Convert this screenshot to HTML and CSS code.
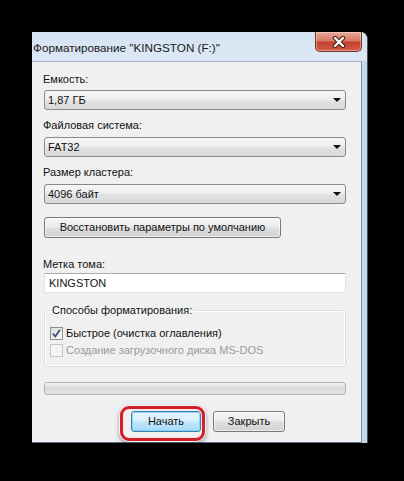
FILE: index.html
```html
<!DOCTYPE html>
<html lang="ru">
<head>
  <meta charset="UTF-8" />
  <meta name="viewport" content="width=device-width, initial-scale=1.0" />
  <title>Форматирование</title>
  <link rel="stylesheet" href="styles.css">
</head>
<body>
  <div class="window">
    <div class="titlebar">
      <span class="title">Форматирование "KINGSTON (F:)"</span>
      <button class="close" aria-label="Закрыть">
        <svg width="14" height="12" viewBox="0 0 14 12">
          <path d="M3 2 L11 10 M11 2 L3 10" stroke="#4a1a12" stroke-width="4.4" stroke-linecap="round" fill="none"/>
          <path d="M3 2 L11 10 M11 2 L3 10" stroke="#ffffff" stroke-width="2.4" stroke-linecap="round" fill="none"/>
        </svg>
      </button>
    </div>
    <div class="client">
      <div class="field-label">Емкость:</div>
      <div class="combo"><span>1,87 ГБ</span><span class="arrow"></span></div>

      <div class="field-label">Файловая система:</div>
      <div class="combo"><span>FAT32</span><span class="arrow"></span></div>

      <div class="field-label">Размер кластера:</div>
      <div class="combo"><span>4096 байт</span><span class="arrow"></span></div>

      <button class="btn btn-defaults">Восстановить параметры по умолчанию</button>

      <div class="field-label label-volume">Метка тома:</div>
      <div class="edit">KINGSTON</div>

      <fieldset class="group">
        <legend>Способы форматирования:</legend>
        <div class="check">
          <span class="box">
            <svg width="11" height="11" viewBox="0 0 11 11">
              <path d="M2 5.5 L4.3 8.5 L9 1.8" stroke="#435278" stroke-width="1.9" fill="none"/>
            </svg>
          </span>
          Быстрое (очистка оглавления)
        </div>
        <div class="check disabled">
          <span class="box"></span>
          Создание загрузочного диска MS-DOS
        </div>
      </fieldset>

      <div class="progress"></div>

      <div class="actions">
        <span class="marked">
          <button class="btn btn-focus">Начать</button>
          <span class="highlight"></span>
        </span>
        <button class="btn btn-close">Закрыть</button>
      </div>
    </div>
  </div>
</body>
</html>
```
FILE: styles.css
```css
body {
  margin: 0;
  background: #000;
  font-family: 'Liberation Sans', Arial, sans-serif;
  font-size: 11px;
  line-height: 15px;
  color: #111;
}
.window {
  margin: 32px 0 0 32px;
  width: 335px;
  background: #c3d7ed;
  border-right: 1px solid #4e4e4e;
  border-top-right-radius: 7px;
}
.titlebar {
  height: 29px;
  display: flex;
  justify-content: space-between;
  align-items: flex-start;
  background: linear-gradient(#d6e3f2, #dce8f5);
  border-top-right-radius: 7px;
}
.title {
  margin: 8px 0 0 1px;
  font-size: 11.7px;
  line-height: 16px;
  color: #1a1a1a;
}
.close {
  margin: 0 5px 0 0;
  width: 47px;
  height: 20px;
  padding: 0;
  display: flex;
  align-items: center;
  justify-content: center;
  border: 1px solid #7b3328;
  border-top: none;
  border-radius: 0 0 5px 5px;
  background: linear-gradient(#e9a899 0%, #d77a66 45%, #c2412f 55%, #d45c45 100%);
  box-shadow: inset 0 0 0 1px rgba(255, 255, 255, 0.35);
}
.client {
  margin: 0 5px 5px 0;
  background: #f0f0f0;
  border-top: 1px solid #a3b2c6;
  border-right: 1px solid #7f90a8;
  border-bottom: 1px solid #5f6f88;
  padding: 10px 15px 10px 12px;
}
.field-label {
  margin: 8px 0 4px -1px;
}
.field-label:first-child {
  margin-top: 0;
  margin-bottom: 3px;
}
.combo {
  height: 20px;
  box-sizing: border-box;
  display: flex;
  align-items: center;
  justify-content: space-between;
  padding: 0 4px 0 3px;
  border: 1px solid #8a8a8a;
  border-radius: 3px;
  background: linear-gradient(#f6f6f6 0%, #eeeeee 45%, #e2e2e2 55%, #d9d9d9 100%);
}
.arrow {
  width: 0;
  height: 0;
  border-left: 4px solid transparent;
  border-right: 4px solid transparent;
  border-top: 4px solid #111;
}
.btn {
  font: inherit;
  color: #111;
  height: 21px;
  padding: 0;
  border: 1px solid #7a7a7a;
  border-radius: 3px;
  background: linear-gradient(#f4f4f4 0%, #ececec 45%, #dedede 55%, #d2d2d2 100%);
  box-shadow: inset 0 0 0 1px rgba(255, 255, 255, 0.6);
}
.btn-defaults {
  display: block;
  width: 237px;
  margin-top: 13px;
}
.label-volume {
  margin-top: 19px;
  margin-bottom: 1px;
}
.edit {
  height: 20px;
  box-sizing: border-box;
  padding: 2px 4px 0;
  background: #fff;
  border: 1px solid #dfe4ea;
  border-top-color: #abadb3;
}
.group {
  margin: 10px 0 0;
  padding: 0 5px 7px 5px;
  border: 1px solid #d5dfe5;
  border-radius: 3px;
  box-shadow: inset 0 0 0 1px #fff;
}
.group legend {
  padding: 0 2px;
}
.check {
  height: 17px;
  display: flex;
  align-items: center;
  gap: 3px;
}
.check:first-of-type {
  margin-top: 7px;
}
.box {
  width: 13px;
  height: 13px;
  box-sizing: border-box;
  display: flex;
  align-items: center;
  justify-content: center;
  border: 1px solid #8e8f8f;
  background: linear-gradient(135deg, #dcdcdc, #fcfcfc);
}
.disabled {
  color: #9a9a9a;
}
.disabled .box {
  border-color: #c6c6c6;
  background: #f4f4f4;
}
.progress {
  margin-top: 15px;
  height: 11px;
  border: 1px solid #b2b2b2;
  border-radius: 3px;
  background: linear-gradient(#f2f2f2 0%, #d9d9d9 50%, #e4e4e4 100%);
}
.actions {
  display: flex;
  gap: 12px;
  margin-top: 16px;
  padding-left: 87px;
}
.marked {
  position: relative;
  display: flex;
}
.btn-focus {
  width: 70px;
  border-color: #3c7fb1;
  background: linear-gradient(#eaf6fd 0%, #d9f0fc 45%, #bee6fd 55%, #a7d9f5 100%);
  box-shadow: inset 0 0 0 1px rgba(120, 210, 245, 0.8);
}
.btn-close {
  width: 72px;
}
.highlight {
  position: absolute;
  left: -11px;
  top: -5px;
  right: -4px;
  bottom: -9px;
  border: 3px solid #d21f2a;
  border-radius: 9px;
  box-shadow: inset 0 0 0 1px #fbe3e3, 0 0 0 1px #f4f4f4, 0 2px 4px 1px rgba(0, 0, 0, 0.35);
}
```
